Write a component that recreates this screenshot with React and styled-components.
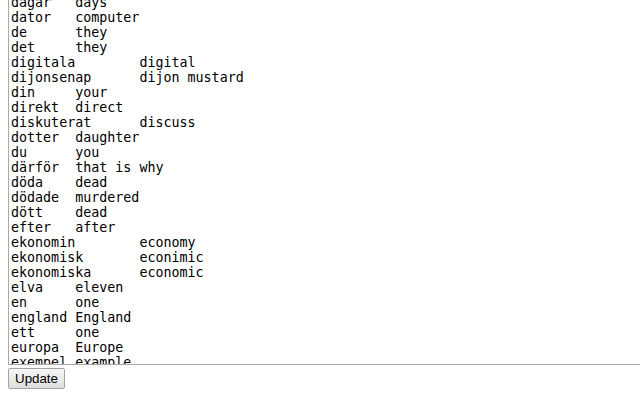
import React from 'react';
import styled, { createGlobalStyle } from 'styled-components';

const GlobalStyle = createGlobalStyle`
    html, body {
        margin: 0;
        padding: 0;
        background: #ffffff;
        overflow: hidden;
    }
    body {
        padding: 0 8px;
    }
`

const words = [
    ['dagar', 'days'],
    ['dator', 'computer'],
    ['de', 'they'],
    ['det', 'they'],
    ['digitala', 'digital'],
    ['dijonsenap', 'dijon mustard'],
    ['din', 'your'],
    ['direkt', 'direct'],
    ['diskuterat', 'discuss'],
    ['dotter', 'daughter'],
    ['du', 'you'],
    ['därför', 'that is why'],
    ['döda', 'dead'],
    ['dödade', 'murdered'],
    ['dött', 'dead'],
    ['efter', 'after'],
    ['ekonomin', 'economy'],
    ['ekonomisk', 'econimic'],
    ['ekonomiska', 'economic'],
    ['elva', 'eleven'],
    ['en', 'one'],
    ['england', 'England'],
    ['ett', 'one'],
    ['europa', 'Europe'],
    ['exempel', 'example'],
    ['fader', 'father'],
]

const Editor = styled.div`
    height: 365px;
    width: calc(100% + 8px);
    box-sizing: border-box;
    border-left: 1px solid #a9a9a9;
    border-bottom: 1px solid #a9a9a9;
    overflow: hidden;
`

const WordList = styled.pre`
    margin: 0;
    padding: 0 2px;
    font-family: "DejaVu Sans Mono", monospace;
    font-size: 13.33px;
    line-height: 15px;
    color: #000000;
    tab-size: 8;
    white-space: pre;
`

const Toolbar = styled.div`
    display: flex;
    padding-top: 3px;
`

const Button = styled.button`
    height: 21px;
    padding: 0 6px;
    font-family: "Liberation Sans", Arial, sans-serif;
    font-size: 13.33px;
    color: #000000;
    border: 1px solid #a3a3a3;
    border-radius: 2px;
    background: linear-gradient(#f6f6f6, #dedede);
`

const App = () => (
    <>
        <GlobalStyle />
        <Editor>
            <WordList style={{ marginTop: -5 }}>
                {words.map(([sv, en]) => `${sv}\t${en}`).join('\n')}
            </WordList>
        </Editor>
        <Toolbar>
            <Button>Update</Button>
        </Toolbar>
    </>
)

export default App;
